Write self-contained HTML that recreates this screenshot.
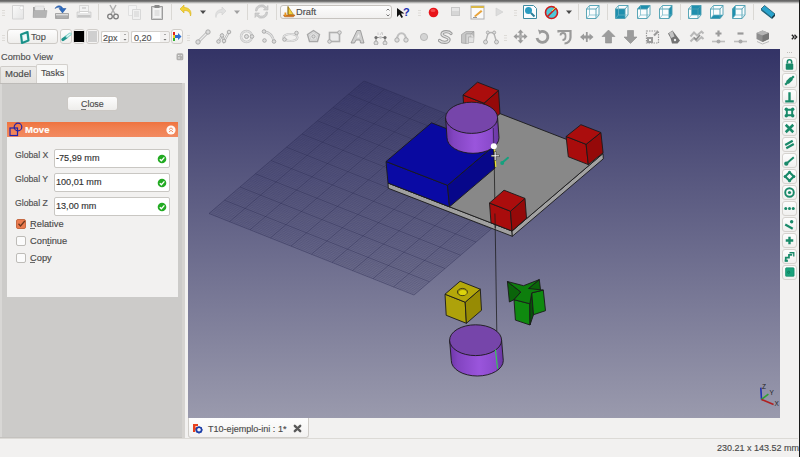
<!DOCTYPE html>
<html><head><meta charset="utf-8">
<style>
*{margin:0;padding:0;box-sizing:border-box}
html,body{width:800px;height:457px;overflow:hidden;background:#f2f1f0;font-family:"Liberation Sans",sans-serif;color:#3c3c3c;position:relative}
.a{position:absolute}
.t{white-space:nowrap;line-height:1;-webkit-text-stroke:.15px currentColor}
</style></head><body>

<div class="a" style="left:0px;top:0px;width:800px;height:4px;background:linear-gradient(#636363,#6b6b6b 30%,#b9b9b8 65%,#f2f1f0)"></div>
<div class="a" style="left:799px;top:0px;width:1px;height:457px;background:#1a1a1a"></div>
<svg class="a" style="left:2px;top:9px" width="4" height="7" viewBox="0 0 4 7"><rect x="0" y="1" width="3" height="1" fill="#dddbd7"/><rect x="0" y="3.5" width="3" height="1" fill="#dddbd7"/><rect x="0" y="6" width="3" height="1" fill="#dddbd7"/></svg>
<svg class="a" style="left:12px;top:5px" width="13" height="15" viewBox="0 0 13 15"><defs><linearGradient id="nd" x1="0" y1="0" x2="1" y2="1"><stop offset="0" stop-color="#fafafa"/><stop offset="1" stop-color="#e4e4e4"/></linearGradient></defs><path d="M.5 .5h11v13.5H.5z" fill="url(#nd)" stroke="#d4d4d4"/><circle cx="9.5" cy="3" r="1.8" fill="#fff" stroke="#d8d8d8" stroke-width=".6"/></svg>
<svg class="a" style="left:32px;top:5px" width="16" height="14" viewBox="0 0 16 14"><path d="M1 2h5l1 1h6v9H1z" fill="#a5a5a5"/><path d="M3 1h9v6H3z" fill="#e8e8e8" stroke="#cfcfcf" stroke-width=".5"/><path d="M1 12.5 1.5 5.5h13.5L14 12.5z" fill="#b4b4b4" stroke="#a0a0a0" stroke-width=".5"/></svg>
<svg class="a" style="left:54px;top:4px" width="16" height="16" viewBox="0 0 16 16"><path d="M1.5 9.5h13v5h-13z" fill="#a0a0a0" stroke="#8e8e8e" stroke-width=".6"/><path d="M2 10h12v1.5H2z" fill="#dcdcdc"/><path d="M2.5 12.5h11v1h-11z" fill="#bdbdbd"/><path d="M1 4.5C3 1 7 .8 9 4.5H12L8.5 9 5 4.5h2.2C6 3 3.5 2.8 1 4.5z" fill="#2d6cc0" stroke="#1e4f96" stroke-width=".5"/></svg>
<svg class="a" style="left:76px;top:5px" width="16" height="14" viewBox="0 0 16 14"><path d="M3.5 .5h9v6h-9z" fill="#f2f2f2" stroke="#c8c8c8" stroke-width=".6"/><path d="M6 3h4" stroke="#bbb"/><path d="M1 7h14v5.5H1z" fill="#e6e6e6" stroke="#c4c4c4" stroke-width=".6"/><path d="M1.5 10h13v2h-13z" fill="#c6c6c6"/><path d="M4 7.5h8" stroke="#fff"/></svg>
<div class="a" style="left:98px;top:4px;width:1px;height:16px;background:#dad8d4"></div>
<svg class="a" style="left:106px;top:4px" width="14" height="16" viewBox="0 0 14 16"><path d="M4 1l5 9M10 1 5 10" stroke="#b0b0b0" stroke-width="1.5" fill="none"/><circle cx="4" cy="12.5" r="2.3" fill="none" stroke="#7d7d7d" stroke-width="1.3"/><circle cx="10" cy="12.5" r="2.3" fill="none" stroke="#7d7d7d" stroke-width="1.3"/></svg>
<svg class="a" style="left:127px;top:4px" width="16" height="16" viewBox="0 0 16 16"><path d="M1.5 1.5h8v10h-8z" fill="#f4f4f4" stroke="#e0e0e0"/><path d="M5.5 5.5h8v10h-8z" fill="#f0f0f0" stroke="#d8d8d8"/><path d="M7 8h5M7 10h5M7 12h5" stroke="#d2d2d2"/></svg>
<svg class="a" style="left:150px;top:4px" width="14" height="16" viewBox="0 0 14 16"><path d="M1.5 2.5h11v13h-11z" fill="#cfcfcf" stroke="#9c9c9c"/><path d="M3 4h8v10H3z" fill="#f3f3f3"/><path d="M4.5 1h5v3h-5z" fill="#8a8a8a"/><path d="M4.5 7h5M4.5 9h5M4.5 11h5" stroke="#cfcfcf"/></svg>
<div class="a" style="left:171px;top:4px;width:1px;height:16px;background:#dad8d4"></div>
<svg class="a" style="left:179px;top:4px" width="14" height="14" viewBox="0 0 14 14"><path d="M5 1 1 5l4 4V6.5c3 0 6 .5 6.5 5.5 1.5-4-.5-8.5-6.5-8.5z" fill="#f2d23a" stroke="#d9b21a" stroke-width=".6"/></svg>
<svg class="a" style="left:200px;top:10px" width="7" height="5" viewBox="0 0 7 5"><path d="M0 .5h6L3 4z" fill="#4a4a4a"/></svg>
<svg class="a" style="left:214px;top:6px" width="13" height="13" viewBox="0 0 13 13"><path d="M8 1l4 4-4 4V6.5c-3 0-5.5.5-6 5-1.2-3.5.5-8 6-8z" fill="#e0e0e0" stroke="#d0d0d0" stroke-width=".6"/></svg>
<svg class="a" style="left:234px;top:10px" width="7" height="5" viewBox="0 0 7 5"><path d="M0 .5h6L3 4z" fill="#a0a0a0"/></svg>
<div class="a" style="left:247px;top:4px;width:1px;height:16px;background:#dad8d4"></div>
<svg class="a" style="left:254px;top:4px" width="15" height="15" viewBox="0 0 15 15"><path d="M3 7a4.5 4.5 0 0 1 8-2.5L9.5 6H14V1.5L12.3 3.2A6 6 0 0 0 1.5 7z" fill="#cfcfcf" stroke="#b8b8b8" stroke-width=".6"/><path d="M12 8a4.5 4.5 0 0 1-8 2.5L5.5 9H1v4.5l1.7-1.7A6 6 0 0 0 13.5 8z" fill="#cfcfcf" stroke="#b8b8b8" stroke-width=".6"/></svg>
<div class="a" style="left:276px;top:4px;width:1px;height:16px;background:#dad8d4"></div>
<div class="a" style="left:280px;top:5px;width:112px;height:14px;border:1px solid #c6c3bf;border-radius:3px;background:linear-gradient(#fdfdfd,#f1f0ef)"></div>
<svg class="a" style="left:282px;top:5px" width="14" height="13" viewBox="0 0 14 13"><path d="M6 1.5 11.5 9.5H6z" fill="#f2cf3a" stroke="#a07810" stroke-width=".6"/><path d="M6 1.5V9.5" stroke="#7a5a10" stroke-width=".8"/><path d="M1.5 10h11.5l-1.5 1.8H2.5z" fill="#e07a18" stroke="#9a5010" stroke-width=".5"/><path d="M2.5 7.5h1.8v3.5H2.5z" fill="#e8961e"/></svg>
<div class="a t" style="left:296px;top:7.5px;font-size:9.3px;color:#4c4c4c;font-weight:normal;">Draft</div>
<svg class="a" style="left:385px;top:7px" width="6" height="11" viewBox="0 0 6 11"><path d="M1.5 3.5 3 2 4.5 3.5M1.5 7.5 3 9 4.5 7.5" fill="none" stroke="#666" stroke-width=".9"/></svg>
<svg class="a" style="left:396px;top:5px" width="14" height="14" viewBox="0 0 14 14"><path d="M1 3 1 12 3.5 9.5 5.5 13 7 12 5 8.5H8.5z" fill="#111"/><text x="7" y="11" font-family="Liberation Sans" font-weight="bold" font-size="11" fill="#1a2fb0">?</text></svg>
<svg class="a" style="left:418px;top:9px" width="4" height="7" viewBox="0 0 4 7"><rect x="0" y="1" width="3" height="1" fill="#dddbd7"/><rect x="0" y="3.5" width="3" height="1" fill="#dddbd7"/><rect x="0" y="6" width="3" height="1" fill="#dddbd7"/></svg>
<svg class="a" style="left:428px;top:7px" width="11" height="11" viewBox="0 0 11 11"><circle cx="5.5" cy="5.5" r="4.8" fill="#e8141a"/><ellipse cx="5" cy="3.5" rx="2.5" ry="1.5" fill="#ff7070" opacity=".6"/></svg>
<svg class="a" style="left:451px;top:7px" width="9" height="9" viewBox="0 0 9 9"><rect x=".5" y=".5" width="8" height="8" fill="#d6d6d6" stroke="#c8c8c8"/><rect x="1" y="1" width="7" height="3" fill="#e6e6e6"/></svg>
<svg class="a" style="left:470px;top:5px" width="15" height="15" viewBox="0 0 15 15"><rect x="1" y="1" width="13" height="13" fill="#fafafa" stroke="#b0b0b0"/><rect x="1" y="1" width="13" height="2" fill="#d9b84a"/><path d="M4 11 11 5l1.5 1.5-7 5.5z" fill="#e8a33a"/><path d="M3 12.5h4" stroke="#999"/></svg>
<svg class="a" style="left:495px;top:7px" width="9" height="10" viewBox="0 0 9 10"><path d="M1 1v8l7-4z" fill="#dcdcdc" stroke="#cfcfcf" stroke-width=".6"/></svg>
<svg class="a" style="left:514px;top:9px" width="4" height="7" viewBox="0 0 4 7"><rect x="0" y="1" width="3" height="1" fill="#dddbd7"/><rect x="0" y="3.5" width="3" height="1" fill="#dddbd7"/><rect x="0" y="6" width="3" height="1" fill="#dddbd7"/></svg>
<svg class="a" style="left:522px;top:4px" width="16" height="16" viewBox="0 0 16 16"><path d="M1.5 1.5h10l3 3v10h-13z" fill="#fbfdff" stroke="#3d8aa0"/><circle cx="6.5" cy="6.5" r="3.5" fill="#2a9bc0"/><path d="M9 9l3.5 3.5" stroke="#2a7f9a" stroke-width="2"/></svg>
<svg class="a" style="left:544px;top:5px" width="16" height="15" viewBox="0 0 16 15"><circle cx="7.5" cy="7.5" r="6" fill="#4ec8d8"/><circle cx="7.5" cy="7.5" r="6" fill="none" stroke="#cc1c1c" stroke-width="1.6"/><path d="M3.3 11.7 11.7 3.3" stroke="#cc1c1c" stroke-width="1.6"/><path d="M8 6 12 2" stroke="#f2d23a" stroke-width="1"/></svg>
<svg class="a" style="left:566px;top:10px" width="7" height="5" viewBox="0 0 7 5"><path d="M0 .5h6L3 4z" fill="#4a4a4a"/></svg>
<div class="a" style="left:578px;top:4px;width:1px;height:16px;background:#dad8d4"></div>
<svg class="a" style="left:585px;top:4px" width="15" height="16" viewBox="0 0 15 16"><path d="M1.5 5h9.5v9.5H1.5zM1.5 5 4.5 1.5H14L11 5zM11 5 14 1.5V11l-3 3.5z" fill="#f9fcfd"/><path d="M1.5 5h9.5v9.5H1.5zM1.5 5 4.5 1.5H14L11 5M14 1.5V11l-3 3.5" fill="none" stroke="#4a9db0" stroke-width=".9"/><path d="M4.5 1.5V11H14M4.5 11 1.5 14.5" fill="none" stroke="#6fb4c4" stroke-width=".7"/></svg>
<div class="a" style="left:607px;top:4px;width:1px;height:16px;background:#dad8d4"></div>
<svg class="a" style="left:614px;top:4px" width="15" height="16" viewBox="0 0 15 16"><path d="M1.5 5h9.5v9.5H1.5zM1.5 5 4.5 1.5H14L11 5zM11 5 14 1.5V11l-3 3.5z" fill="#f9fcfd"/><path d="M1.5 5h9.5v9.5H1.5z" fill="#1f8fae"/><path d="M1.5 5h9.5v9.5H1.5zM1.5 5 4.5 1.5H14L11 5M14 1.5V11l-3 3.5" fill="none" stroke="#4a9db0" stroke-width=".9"/><path d="M4.5 1.5V11H14M4.5 11 1.5 14.5" fill="none" stroke="#6fb4c4" stroke-width=".7"/></svg>
<svg class="a" style="left:636px;top:4px" width="15" height="16" viewBox="0 0 15 16"><path d="M1.5 5h9.5v9.5H1.5zM1.5 5 4.5 1.5H14L11 5zM11 5 14 1.5V11l-3 3.5z" fill="#f9fcfd"/><path d="M1.5 5 4.5 1.5H14L11 5z" fill="#1f8fae"/><path d="M1.5 5h9.5v9.5H1.5zM1.5 5 4.5 1.5H14L11 5M14 1.5V11l-3 3.5" fill="none" stroke="#4a9db0" stroke-width=".9"/><path d="M4.5 1.5V11H14M4.5 11 1.5 14.5" fill="none" stroke="#6fb4c4" stroke-width=".7"/></svg>
<svg class="a" style="left:658px;top:4px" width="15" height="16" viewBox="0 0 15 16"><path d="M1.5 5h9.5v9.5H1.5zM1.5 5 4.5 1.5H14L11 5zM11 5 14 1.5V11l-3 3.5z" fill="#f9fcfd"/><path d="M11 5 14 1.5V11l-3 3.5z" fill="#1f8fae"/><path d="M1.5 5h9.5v9.5H1.5zM1.5 5 4.5 1.5H14L11 5M14 1.5V11l-3 3.5" fill="none" stroke="#4a9db0" stroke-width=".9"/><path d="M4.5 1.5V11H14M4.5 11 1.5 14.5" fill="none" stroke="#6fb4c4" stroke-width=".7"/></svg>
<div class="a" style="left:680px;top:4px;width:1px;height:16px;background:#dad8d4"></div>
<svg class="a" style="left:687px;top:4px" width="15" height="16" viewBox="0 0 15 16"><path d="M1.5 5h9.5v9.5H1.5zM1.5 5 4.5 1.5H14L11 5zM11 5 14 1.5V11l-3 3.5z" fill="#f9fcfd"/><path d="M4.5 1.5H14V11H4.5z" fill="#1f8fae"/><path d="M1.5 5h9.5v9.5H1.5zM1.5 5 4.5 1.5H14L11 5M14 1.5V11l-3 3.5" fill="none" stroke="#4a9db0" stroke-width=".9"/><path d="M4.5 1.5V11H14M4.5 11 1.5 14.5" fill="none" stroke="#6fb4c4" stroke-width=".7"/></svg>
<svg class="a" style="left:709px;top:4px" width="15" height="16" viewBox="0 0 15 16"><path d="M1.5 5h9.5v9.5H1.5zM1.5 5 4.5 1.5H14L11 5zM11 5 14 1.5V11l-3 3.5z" fill="#f9fcfd"/><path d="M1.5 14.5 4.5 11H14l-3 3.5z" fill="#1f8fae"/><path d="M1.5 5h9.5v9.5H1.5zM1.5 5 4.5 1.5H14L11 5M14 1.5V11l-3 3.5" fill="none" stroke="#4a9db0" stroke-width=".9"/><path d="M4.5 1.5V11H14M4.5 11 1.5 14.5" fill="none" stroke="#6fb4c4" stroke-width=".7"/></svg>
<svg class="a" style="left:731px;top:4px" width="15" height="16" viewBox="0 0 15 16"><path d="M1.5 5h9.5v9.5H1.5zM1.5 5 4.5 1.5H14L11 5zM11 5 14 1.5V11l-3 3.5z" fill="#f9fcfd"/><path d="M1.5 5 4.5 1.5V11l-3 3.5z" fill="#1f8fae"/><path d="M1.5 5h9.5v9.5H1.5zM1.5 5 4.5 1.5H14L11 5M14 1.5V11l-3 3.5" fill="none" stroke="#4a9db0" stroke-width=".9"/><path d="M4.5 1.5V11H14M4.5 11 1.5 14.5" fill="none" stroke="#6fb4c4" stroke-width=".7"/></svg>
<div class="a" style="left:753px;top:4px;width:1px;height:16px;background:#dad8d4"></div>
<svg class="a" style="left:760px;top:4px" width="16" height="16" viewBox="0 0 16 16"><path d="M1 5 4.5 1.5 15 10 11.5 13.5z" fill="#2aa3cc" stroke="#0f4a5e" stroke-width=".7"/><path d="M11.5 13.5 15 10 15 12 12 15z" fill="#123848"/><path d="M1 5 11.5 13.5 12 15 1.3 6.8z" fill="#14607a"/></svg>
<svg class="a" style="left:2px;top:34px" width="4" height="7" viewBox="0 0 4 7"><rect x="0" y="1" width="3" height="1" fill="#dddbd7"/><rect x="0" y="3.5" width="3" height="1" fill="#dddbd7"/><rect x="0" y="6" width="3" height="1" fill="#dddbd7"/></svg>
<div class="a" style="left:7px;top:29px;width:51px;height:15px;border:1px solid #cdcac6;border-radius:3px;background:linear-gradient(#fdfdfd,#efeeec)"></div>
<svg class="a" style="left:19px;top:31px" width="11" height="13" viewBox="0 0 11 13"><path d="M2 3.5 8.5 1 9.5 9.5 3 12z" fill="#e8f3f3" stroke="#23a098" stroke-width="2.2" stroke-linejoin="round"/><path d="M4.2 5.2 7 4.2 7.4 7.8 4.6 8.8z" fill="#f4fbfb"/><path d="M2 3.5 8.5 1 9.5 9.5 3 12z" fill="none" stroke="#157a74" stroke-width=".6"/></svg>
<div class="a t" style="left:31px;top:33px;font-size:9.2px;color:#505050;font-weight:normal;">Top</div>
<div class="a" style="left:60px;top:29px;width:12px;height:15px;border:1px solid #d0cdc9;border-radius:3px;background:linear-gradient(#fdfdfd,#efeeec)"></div>
<svg class="a" style="left:61px;top:31px" width="11" height="11" viewBox="0 0 11 11"><path d="M2 8.5 5.5 6" stroke="#1f948c" stroke-width="3.2" stroke-linecap="round"/><path d="M6 5.5 9.2 3" stroke="#7fd0c8" stroke-width="3" stroke-linecap="round"/><path d="M6 5.5 9.2 3" stroke="#e8f8f6" stroke-width="1.2" stroke-linecap="round"/></svg>
<div class="a" style="left:73px;top:29px;width:12px;height:15px;border:1px solid #d0cdc9;border-radius:3px;background:#f4f3f2"></div>
<div class="a" style="left:74px;top:31px;width:10px;height:11px;background:#000"></div>
<div class="a" style="left:86px;top:29px;width:13px;height:15px;border:1px solid #d0cdc9;border-radius:3px;background:#f4f3f2"></div>
<div class="a" style="left:88px;top:31px;width:9px;height:11px;background:#cfcfcf"></div>
<div class="a" style="left:101px;top:31px;width:28px;height:12px;border:1px solid #d3d0cc;border-radius:2px;background:#f3f2f1"></div>
<div class="a" style="left:101px;top:31px;width:19px;height:12px;background:#fff;border:1px solid #d3d0cc;border-right:none;border-radius:2px 0 0 2px"></div>
<div class="a t" style="left:103px;top:33.5px;font-size:9px;color:#505050;font-weight:normal;">2px</div>
<svg class="a" style="left:122px;top:32px" width="6" height="10" viewBox="0 0 6 10"><path d="M2 3 3 2 4 3" fill="none" stroke="#888" stroke-width=".7"/><path d="M1.5 7h3L3 8.6z" fill="#6a6a6a"/></svg>
<div class="a" style="left:131px;top:31px;width:39px;height:12px;border:1px solid #d3d0cc;border-radius:2px;background:#f3f2f1"></div>
<div class="a" style="left:131px;top:31px;width:29px;height:12px;background:#fff;border:1px solid #d3d0cc;border-right:none;border-radius:2px 0 0 2px"></div>
<div class="a t" style="left:134px;top:33.5px;font-size:9px;color:#505050;font-weight:normal;">0,20</div>
<svg class="a" style="left:162px;top:32px" width="6" height="10" viewBox="0 0 6 10"><path d="M2 3 3 2 4 3" fill="none" stroke="#888" stroke-width=".7"/><path d="M1.5 7h3L3 8.6z" fill="#6a6a6a"/></svg>
<div class="a" style="left:171px;top:29px;width:12px;height:15px;border:1px solid #d0cdc9;border-radius:3px;background:linear-gradient(#fdfdfd,#efeeec)"></div>
<svg class="a" style="left:172px;top:31px" width="10" height="11" viewBox="0 0 10 11"><rect x="1" y="1" width="2" height="3" fill="#e02020"/><rect x="1" y="4" width="2" height="3" fill="#f0d020"/><rect x="1" y="7" width="2" height="3" fill="#30b030"/><path d="M3 4h3V2l3.5 3.5L6 9V7H3z" fill="#2f6fd0"/></svg>
<svg class="a" style="left:187px;top:34px" width="4" height="7" viewBox="0 0 4 7"><rect x="0" y="1" width="3" height="1" fill="#dddbd7"/><rect x="0" y="3.5" width="3" height="1" fill="#dddbd7"/><rect x="0" y="6" width="3" height="1" fill="#dddbd7"/></svg>
<svg class="a" style="left:195px;top:29px" width="16" height="16" viewBox="0 0 16 16"><path d="M3 13 13 3" stroke="#b5b5b5" stroke-width="3"/><path d="M3 13 13 3" stroke="#ececec" stroke-width="1.4"/><circle cx="3" cy="13" r="2.2" fill="#dcdcdc" stroke="#a0a0a0" stroke-width=".8"/><circle cx="13" cy="3" r="2.2" fill="#dcdcdc" stroke="#a0a0a0" stroke-width=".8"/></svg>
<svg class="a" style="left:216px;top:29px" width="16" height="16" viewBox="0 0 16 16"><path d="M2.5 12.5 6 6.5 8 12 13 3" stroke="#b5b5b5" stroke-width="2.4" fill="none"/><path d="M2.5 12.5 6 6.5 8 12 13 3" stroke="#ececec" stroke-width="1" fill="none"/><circle cx="2.5" cy="12.5" r="1.8" fill="#dcdcdc" stroke="#a0a0a0" stroke-width=".8"/><circle cx="6" cy="6.5" r="1.8" fill="#dcdcdc" stroke="#a0a0a0" stroke-width=".8"/><circle cx="8" cy="12" r="1.8" fill="#dcdcdc" stroke="#a0a0a0" stroke-width=".8"/><circle cx="13" cy="3" r="1.8" fill="#dcdcdc" stroke="#a0a0a0" stroke-width=".8"/></svg>
<svg class="a" style="left:239px;top:29px" width="16" height="16" viewBox="0 0 16 16"><circle cx="7.5" cy="7.5" r="5.5" fill="none" stroke="#c4c4c4" stroke-width="2.4"/><circle cx="7.5" cy="7.5" r="5.5" fill="none" stroke="#ededed" stroke-width="1"/><circle cx="7.5" cy="7.5" r="2" fill="#dcdcdc" stroke="#a0a0a0" stroke-width=".8"/><circle cx="13" cy="7.5" r="1.8" fill="#dcdcdc" stroke="#a0a0a0" stroke-width=".8"/></svg>
<svg class="a" style="left:261px;top:29px" width="16" height="16" viewBox="0 0 16 16"><path d="M3 2.5Q11 3.5 13 12.5" stroke="#c0c0c0" stroke-width="2.4" fill="none"/><path d="M3 2.5Q11 3.5 13 12.5" stroke="#ededed" stroke-width="1" fill="none"/><circle cx="3" cy="2.5" r="1.8" fill="#dcdcdc" stroke="#a0a0a0" stroke-width=".8"/><circle cx="3.5" cy="11.5" r="1.8" fill="#dcdcdc" stroke="#a0a0a0" stroke-width=".8"/><circle cx="13" cy="12.5" r="1.8" fill="#dcdcdc" stroke="#a0a0a0" stroke-width=".8"/></svg>
<svg class="a" style="left:282px;top:29px" width="17" height="16" viewBox="0 0 17 16"><ellipse cx="8.5" cy="8.5" rx="7" ry="3.5" fill="none" stroke="#c0c0c0" stroke-width="2.2"/><ellipse cx="8.5" cy="8.5" rx="7" ry="3.5" fill="none" stroke="#ededed" stroke-width="1"/><circle cx="2.5" cy="10.5" r="1.8" fill="#dcdcdc" stroke="#a0a0a0" stroke-width=".8"/><circle cx="14.5" cy="4" r="1.8" fill="#dcdcdc" stroke="#a0a0a0" stroke-width=".8"/></svg>
<svg class="a" style="left:306px;top:29px" width="16" height="16" viewBox="0 0 16 16"><path d="M7.5 1.5 13.5 5.5 11.5 12.5H3.5L1.5 5.5z" fill="#e4e4e4" stroke="#a8a8a8" stroke-width="1.4"/><path d="M7.5 3.5 11.5 6 10 11H5L3.5 6z" fill="none" stroke="#cfcfcf"/><circle cx="7.5" cy="7.5" r="1.6" fill="#dcdcdc" stroke="#a0a0a0" stroke-width=".8"/></svg>
<svg class="a" style="left:327px;top:29px" width="16" height="16" viewBox="0 0 16 16"><rect x="2.5" y="3.5" width="10" height="9" fill="#ececec" stroke="#b0b0b0" stroke-width="1.6"/><circle cx="2.5" cy="12.5" r="1.8" fill="#dcdcdc" stroke="#a0a0a0" stroke-width=".8"/><circle cx="12.5" cy="3.5" r="1.8" fill="#dcdcdc" stroke="#a0a0a0" stroke-width=".8"/></svg>
<svg class="a" style="left:350px;top:29px" width="16" height="16" viewBox="0 0 16 16"><path d="M1 14 7 1.5h3.5L14 14h-3.5L10 11H6l-1.5 3z" fill="#cfcfcf" stroke="#8e8e8e" stroke-width=".8"/><path d="M6.8 8.5h2.8L9 4.5z" fill="#f2f1f0"/></svg>
<svg class="a" style="left:372px;top:29px" width="16" height="16" viewBox="0 0 16 16"><path d="M4 9v5M13 9v5M4 8.5h9" stroke="#9a9a9a" stroke-width="1.2"/><circle cx="4" cy="8.5" r="1.6" fill="#6e6e6e"/><circle cx="13" cy="8.5" r="1.6" fill="#6e6e6e"/><circle cx="8.5" cy="8.5" r="1.4" fill="#c8c8c8"/><circle cx="4" cy="14" r="2" fill="#dcdcdc" stroke="#a0a0a0" stroke-width=".8"/><circle cx="13" cy="14" r="2" fill="#dcdcdc" stroke="#a0a0a0" stroke-width=".8"/><path d="M6 3.5v2.5M8 6l2-3M10.5 3.5v2.5" stroke="#c4c4c4" stroke-width=".8"/></svg>
<svg class="a" style="left:394px;top:29px" width="16" height="16" viewBox="0 0 16 16"><path d="M3 11C3 2 12 2 12 11" stroke="#c0c0c0" stroke-width="2.2" fill="none"/><circle cx="3" cy="11" r="2.2" fill="#dcdcdc" stroke="#a0a0a0" stroke-width=".8"/><circle cx="12" cy="11" r="2.2" fill="#dcdcdc" stroke="#a0a0a0" stroke-width=".8"/></svg>
<svg class="a" style="left:419px;top:32px" width="10" height="10" viewBox="0 0 10 10"><circle cx="5" cy="5" r="3.6" fill="#d4d4d4" stroke="#b0b0b0" stroke-width=".8"/></svg>
<svg class="a" style="left:438px;top:29px" width="16" height="16" viewBox="0 0 16 16"><path d="M13 4.5C11 2 4.5 2 4 5S12 7.5 11 11 3.5 13.5 1.5 11.5" stroke="#9e9e9e" stroke-width="3.2" fill="none" stroke-linecap="round"/><path d="M13 4.5C11 2 4.5 2 4 5S12 7.5 11 11 3.5 13.5 1.5 11.5" stroke="#e6e6e6" stroke-width="1.1" fill="none" stroke-linecap="round"/></svg>
<svg class="a" style="left:460px;top:29px" width="16" height="16" viewBox="0 0 16 16"><path d="M1.5 5.5 6 2.5h8l-3 2.5H6v9.5L1.5 14z" fill="#c6c6c6" stroke="#a0a0a0" stroke-width=".7"/><path d="M6 5h5v3H8.5v6.5H6z" fill="#d6d6d6" stroke="#a8a8a8" stroke-width=".6"/><path d="M8.5 8H14l-.5 5.5H8.5z" fill="#e2e2e2" stroke="#ababab" stroke-width=".6"/><path d="M11 5 14 2.5V8" fill="#bdbdbd" stroke="#a0a0a0" stroke-width=".6"/></svg>
<svg class="a" style="left:483px;top:29px" width="16" height="16" viewBox="0 0 16 16"><path d="M2.5 13 5 4.5Q8 2.5 11 4.5L13.5 13" stroke="#b4b4b4" stroke-width="1.4" fill="none"/><circle cx="2.5" cy="13" r="2" fill="#dcdcdc" stroke="#a0a0a0" stroke-width=".8"/><circle cx="13.5" cy="13" r="2" fill="#dcdcdc" stroke="#a0a0a0" stroke-width=".8"/><circle cx="4.8" cy="3.5" r="1.5" fill="#dcdcdc" stroke="#a0a0a0" stroke-width=".8"/><circle cx="11.2" cy="3.5" r="1.5" fill="#dcdcdc" stroke="#a0a0a0" stroke-width=".8"/></svg>
<svg class="a" style="left:504px;top:34px" width="4" height="7" viewBox="0 0 4 7"><rect x="0" y="1" width="3" height="1" fill="#dddbd7"/><rect x="0" y="3.5" width="3" height="1" fill="#dddbd7"/><rect x="0" y="6" width="3" height="1" fill="#dddbd7"/></svg>
<svg class="a" style="left:513px;top:29px" width="16" height="16" viewBox="0 0 16 16"><path d="M7.5 2.5v10M2.5 7.5h10" stroke="#9a9a9a" stroke-width="2.2"/><path d="M7.5 .5 10.5 3.8H4.5zM7.5 14.5 10.5 11.2H4.5zM.5 7.5 3.8 4.5V10.5zM14.5 7.5 11.2 4.5V10.5z" fill="#9a9a9a"/><circle cx="7.5" cy="7.5" r="1.8" fill="#b0b0b0"/></svg>
<svg class="a" style="left:535px;top:29px" width="16" height="16" viewBox="0 0 16 16"><path d="M6 2.5A5.5 5.5 0 1 1 2 9" stroke="#9a9a9a" stroke-width="2.8" fill="none"/><path d="M3 .5 8 2.5 4.5 5.5z" fill="#9a9a9a"/></svg>
<svg class="a" style="left:557px;top:29px" width="16" height="16" viewBox="0 0 16 16"><path d="M1.5 3.5V2h12v6.5a6 6 0 0 1-6 6" stroke="#9a9a9a" stroke-width="2.2" fill="none"/><path d="M3.5 6.5a2.5 2.5 0 0 1 5 0V8a3 3 0 0 1-3 3" stroke="#9a9a9a" stroke-width="1.8" fill="none"/></svg>
<svg class="a" style="left:579px;top:29px" width="16" height="16" viewBox="0 0 16 16"><path d="M1 8 5 4.5v2h5.5v-2L14.5 8 10.5 11.5v-2H5v2z" fill="#9a9a9a"/><path d="M7.8 3v10" stroke="#9a9a9a" stroke-width="1.8"/></svg>
<svg class="a" style="left:601px;top:29px" width="15" height="16" viewBox="0 0 15 16"><path d="M7.5 1 14 7.5H10.5V14h-6V7.5H1z" fill="#9c9c9c" stroke="#8d8d8d" stroke-width=".6"/></svg>
<svg class="a" style="left:623px;top:29px" width="15" height="16" viewBox="0 0 15 16"><path d="M7.5 14.5 14 8H10.5V1.5h-6V8H1z" fill="#9c9c9c" stroke="#8d8d8d" stroke-width=".6"/></svg>
<svg class="a" style="left:645px;top:29px" width="16" height="16" viewBox="0 0 16 16"><rect x="1.5" y="2" width="12" height="12" fill="none" stroke="#9a9a9a" stroke-width="1.2" stroke-dasharray="1.5 1"/><rect x="2" y="8" width="6" height="6" fill="#9a9a9a"/><rect x="4" y="10" width="2" height="2" fill="#f0f0f0"/><path d="M9 6.5 13 2.5" stroke="#9a9a9a" stroke-width="2.2"/></svg>
<svg class="a" style="left:666px;top:29px" width="16" height="16" viewBox="0 0 16 16"><path d="M2 4.5 6.5 1.5 14 11.5 11.5 14.5H6L4.5 9z" fill="#737373"/><path d="M3 4 6.5 2 8.5 7.5 5 9z" fill="#c4c4c4"/><circle cx="9" cy="11" r="1.2" fill="#eee"/></svg>
<svg class="a" style="left:689px;top:29px" width="16" height="16" viewBox="0 0 16 16"><path d="M1.5 7.5 5 3.5l3 3 4.5-4 2 2" stroke="#b8b8b8" stroke-width="2" fill="none"/><path d="M1.5 12.5 5 9l3 3 4.5-4 2 2" stroke="#b8b8b8" stroke-width="2" fill="none"/><path d="M5 8.5l2 2 4-4.5" stroke="#8e8e8e" stroke-width="1.6" fill="none"/></svg>
<svg class="a" style="left:711px;top:29px" width="16" height="16" viewBox="0 0 16 16"><path d="M7.5 1.5v6M4.5 4.5h6" stroke="#9a9a9a" stroke-width="2.2"/><path d="M1 12.5h13" stroke="#bdbdbd" stroke-width="1.6"/><circle cx="7.5" cy="12.5" r="2" fill="#a8a8a8"/></svg>
<svg class="a" style="left:733px;top:29px" width="16" height="16" viewBox="0 0 16 16"><path d="M4.5 4.5h6" stroke="#9a9a9a" stroke-width="2.2"/><path d="M1 12.5h13" stroke="#bdbdbd" stroke-width="1.6"/><circle cx="7.5" cy="12.5" r="2" fill="#a8a8a8"/></svg>
<svg class="a" style="left:755px;top:29px" width="16" height="16" viewBox="0 0 16 16"><path d="M1.5 4 7.5 1.5 14 4v6l-6.5 3L1.5 10z" fill="#8e8e8e"/><path d="M1.5 4 7.5 1.5 14 4 7.5 6.5z" fill="#b5b5b5"/><path d="M7.5 6.5v6.5L14 10V4z" fill="#777"/><path d="M2 12.5 7.5 15 14 12.5" stroke="#bbb" fill="none"/></svg>
<svg class="a" style="left:791px;top:34px" width="7" height="6" viewBox="0 0 7 6"><path d="M.8 .8 3 3 .8 5.2M3.5 .8 5.7 3 3.5 5.2" stroke="#222" stroke-width="1.3" fill="none"/></svg>
<div class="a" style="left:0px;top:48px;width:188px;height:1px;background:#f2f1f0"></div>
<div class="a t" style="left:1px;top:53px;font-size:9.2px;color:#505050;font-weight:normal;">Combo View</div>
<svg class="a" style="left:176px;top:53px" width="8" height="8" viewBox="0 0 8 8"><rect x=".5" y=".3" width="6.8" height="7" rx="1.5" fill="#b2b1af"/><path d="M2 2.5h1.5M2 5h2M5.5 5.8v.3" stroke="#eee" stroke-width=".9"/><circle cx="5.3" cy="2.6" r=".7" fill="#e6e6e6"/></svg>
<div class="a" style="left:0px;top:66px;width:37px;height:17px;border:1px solid #cfccc8;border-bottom:none;border-radius:2px 2px 0 0;background:linear-gradient(#ecebe9,#e3e1de)"></div>
<div class="a t" style="left:5px;top:69.2px;font-size:9.6px;color:#4a4a4a;font-weight:normal;">Model</div>
<div class="a" style="left:36px;top:64px;width:32px;height:19px;border:1px solid #d3d0cc;border-bottom:none;border-radius:2px 2px 0 0;background:#f8f8f7"></div>
<div class="a t" style="left:41px;top:69.2px;font-size:9.1px;color:#4a4a4a;font-weight:normal;">Tasks</div>
<div class="a" style="left:0px;top:83px;width:185px;height:355px;background:#cccbc9;border-top:1px solid #bdbbb8;border-bottom:1px solid #c4c2bf"></div>
<div class="a" style="left:0px;top:84px;width:2px;height:353px;background:#d8d7d5"></div>
<div class="a" style="left:182px;top:83px;width:3px;height:355px;background:#d5d3d0"></div>
<div class="a" style="left:67px;top:96px;width:51px;height:15px;border:1px solid #cbc8c4;border-radius:3px;background:linear-gradient(#fdfdfd,#eeedeb)"></div>
<div class="a t" style="left:81px;top:99.5px;font-size:8.9px;color:#4a4a4a;font-weight:normal;">Close</div>
<div class="a" style="left:81px;top:109px;width:5px;height:1px;background:#7a7a7a"></div>
<div class="a" style="left:7px;top:122px;width:171px;height:15px;background:linear-gradient(#ef733f,#f07f4f 35%,#f28a61)"></div>
<svg class="a" style="left:9px;top:122px" width="15" height="15" viewBox="0 0 15 15"><rect x="1" y="6" width="7.5" height="7.5" fill="none" stroke="#2222aa" stroke-width="1.2"/><circle cx="9" cy="5" r="3.8" fill="none" stroke="#2222aa" stroke-width="1.2"/></svg>
<div class="a t" style="left:25px;top:125px;font-size:9.6px;color:#ffffff;font-weight:bold;">Move</div>
<svg class="a" style="left:166px;top:125px" width="11" height="10" viewBox="0 0 11 10"><circle cx="5" cy="5" r="4.6" fill="#fff" opacity=".95"/><path d="M3 4.5 5 2.8 7 4.5M3 7 5 5.3 7 7" stroke="#ef8a60" stroke-width="1" fill="none"/></svg>
<div class="a" style="left:7px;top:137px;width:171px;height:160px;background:#f2f1f0"></div>
<div class="a t" style="left:15px;top:151.3px;font-size:8.7px;color:#505050;font-weight:normal;">Global X</div>
<div class="a" style="left:54px;top:149px;width:116px;height:19px;background:#fff;border:1px solid #c9c7c3;border-radius:2px"></div>
<div class="a t" style="left:56px;top:154px;font-size:9.1px;color:#333333;font-weight:normal;">-75,99 mm</div>
<svg class="a" style="left:157px;top:154px" width="10" height="10" viewBox="0 0 10 10"><circle cx="5" cy="5" r="4.3" fill="#22aa22"/><path d="M2.8 5.2 4.4 6.8 7.4 3.4" stroke="#fff" stroke-width="1.3" fill="none"/></svg>
<div class="a t" style="left:15px;top:175.3px;font-size:8.7px;color:#505050;font-weight:normal;">Global Y</div>
<div class="a" style="left:54px;top:173px;width:116px;height:19px;background:#fff;border:1px solid #c9c7c3;border-radius:2px"></div>
<div class="a t" style="left:56px;top:178px;font-size:9.1px;color:#333333;font-weight:normal;">100,01 mm</div>
<svg class="a" style="left:157px;top:178px" width="10" height="10" viewBox="0 0 10 10"><circle cx="5" cy="5" r="4.3" fill="#22aa22"/><path d="M2.8 5.2 4.4 6.8 7.4 3.4" stroke="#fff" stroke-width="1.3" fill="none"/></svg>
<div class="a t" style="left:15px;top:199.3px;font-size:8.7px;color:#505050;font-weight:normal;">Global Z</div>
<div class="a" style="left:54px;top:197px;width:116px;height:19px;background:#fff;border:1px solid #c9c7c3;border-radius:2px"></div>
<div class="a t" style="left:56px;top:202px;font-size:9.1px;color:#333333;font-weight:normal;">13,00 mm</div>
<svg class="a" style="left:157px;top:202px" width="10" height="10" viewBox="0 0 10 10"><circle cx="5" cy="5" r="4.3" fill="#22aa22"/><path d="M2.8 5.2 4.4 6.8 7.4 3.4" stroke="#fff" stroke-width="1.3" fill="none"/></svg>
<div class="a" style="left:16px;top:219px;width:10px;height:10px;border:1px solid #c66a44;border-radius:2px;background:#ec7b4f"></div>
<svg class="a" style="left:16px;top:218px" width="11" height="11" viewBox="0 0 11 11"><path d="M2.5 5.8 4.5 8 8.8 3" stroke="#6a3820" stroke-width="1.3" fill="none"/></svg>
<div class="a" style="left:16px;top:236px;width:10px;height:10px;border:1px solid #bebcb8;border-radius:2px;background:#fbfbfb"></div>
<div class="a" style="left:16px;top:253px;width:10px;height:10px;border:1px solid #bebcb8;border-radius:2px;background:#fbfbfb"></div>
<div class="a t" style="left:30px;top:219.6px;font-size:9.3px;color:#4a4a4a;font-weight:normal;">Relative</div>
<div class="a t" style="left:30px;top:236.6px;font-size:9.3px;color:#4a4a4a;font-weight:normal;">Continue</div>
<div class="a t" style="left:30px;top:253.6px;font-size:9.3px;color:#4a4a4a;font-weight:normal;">Copy</div>
<div class="a" style="left:30px;top:228px;width:5px;height:1px;background:#6a6a6a"></div>
<div class="a" style="left:47px;top:245px;width:3px;height:1px;background:#6a6a6a"></div>
<div class="a" style="left:30px;top:262px;width:5px;height:1px;background:#6a6a6a"></div>
<div class="a" style="left:185px;top:49px;width:3px;height:370px;background:#f2f1f0"></div>
<svg class="a" style="left:188px;top:49px" width="592" height="369" viewBox="188 49 592 369"><defs><linearGradient id="bg" x1="0" y1="0" x2="0" y2="1"><stop offset="0" stop-color="#333366"/><stop offset="1" stop-color="#9a9aad"/></linearGradient><linearGradient id="cyl" x1="0" y1="0" x2="1" y2="0"><stop offset="0" stop-color="#6c36a6"/><stop offset=".15" stop-color="#8244c0"/><stop offset=".55" stop-color="#9a55dc"/><stop offset=".86" stop-color="#8a4acb"/><stop offset=".9" stop-color="#7440b0"/><stop offset="1" stop-color="#6a36a2"/></linearGradient></defs>
<rect x="188" y="49" width="592" height="369" fill="url(#bg)"/>
<polygon points="209.0,213.5 414.0,295.0 569.0,162.5 364.0,81.0" fill="#1c1c44" opacity=".07"/>
<path d="M211.1,214.3L366.1,81.8M210.6,212.2L415.6,293.7M213.1,215.1L368.1,82.6M212.1,210.8L417.1,292.4M215.2,215.9L370.1,83.4M213.7,209.5L418.6,291.0M217.2,216.8L372.2,84.3M215.2,208.2L420.2,289.7M219.2,217.6L374.2,85.1M216.8,206.9L421.8,288.4M221.3,218.4L376.3,85.9M218.3,205.6L423.3,287.1M223.3,219.2L378.4,86.7M219.8,204.2L424.9,285.7M225.4,220.0L380.4,87.5M221.4,202.9L426.4,284.4M227.4,220.8L382.4,88.3M222.9,201.6L427.9,283.1M231.6,222.5L386.6,90.0M226.1,198.9L431.1,280.4M233.6,223.3L388.6,90.8M227.6,197.6L432.6,279.1M235.7,224.1L390.6,91.6M229.2,196.3L434.1,277.8M237.7,224.9L392.7,92.4M230.7,194.9L435.7,276.4M239.8,225.7L394.8,93.2M232.2,193.6L437.2,275.1M241.8,226.5L396.8,94.0M233.8,192.3L438.8,273.8M243.8,227.4L398.9,94.9M235.3,191.0L440.4,272.5M245.9,228.2L400.9,95.7M236.9,189.7L441.9,271.1M247.9,229.0L402.9,96.5M238.4,188.3L443.4,269.8M252.1,230.6L407.1,98.1M241.6,185.7L446.6,267.2M254.1,231.4L409.1,98.9M243.1,184.3L448.1,265.9M256.1,232.2L411.1,99.7M244.7,183.0L449.6,264.5M258.2,233.1L413.2,100.6M246.2,181.7L451.2,263.2M260.2,233.9L415.2,101.4M247.8,180.4L452.8,261.9M262.3,234.7L417.3,102.2M249.3,179.1L454.3,260.6M264.4,235.5L419.4,103.0M250.8,177.7L455.9,259.2M266.4,236.3L421.4,103.8M252.4,176.4L457.4,257.9M268.4,237.1L423.4,104.6M253.9,175.1L458.9,256.6M272.6,238.8L427.6,106.3M257.1,172.4L462.1,253.9M274.6,239.6L429.6,107.1M258.6,171.1L463.6,252.6M276.6,240.4L431.6,107.9M260.1,169.8L465.1,251.3M278.7,241.2L433.7,108.7M261.7,168.4L466.7,249.9M280.8,242.0L435.8,109.5M263.2,167.1L468.2,248.6M282.8,242.8L437.8,110.3M264.8,165.8L469.8,247.3M284.9,243.7L439.9,111.2M266.4,164.5L471.4,246.0M286.9,244.5L441.9,112.0M267.9,163.2L472.9,244.7M288.9,245.3L443.9,112.8M269.4,161.8L474.4,243.3M293.1,246.9L448.1,114.4M272.6,159.2L477.6,240.7M295.1,247.7L450.1,115.2M274.1,157.8L479.1,239.3M297.1,248.5L452.1,116.0M275.6,156.5L480.6,238.0M299.2,249.4L454.2,116.9M277.2,155.2L482.2,236.7M301.2,250.2L456.2,117.7M278.8,153.9L483.8,235.4M303.3,251.0L458.3,118.5M280.3,152.6L485.3,234.1M305.4,251.8L460.4,119.3M281.9,151.2L486.9,232.7M307.4,252.6L462.4,120.1M283.4,149.9L488.4,231.4M309.4,253.4L464.4,120.9M284.9,148.6L489.9,230.1M313.6,255.1L468.6,122.6M288.1,145.9L493.1,227.4M315.6,255.9L470.6,123.4M289.6,144.6L494.6,226.1M317.6,256.7L472.6,124.2M291.1,143.3L496.1,224.8M319.7,257.5L474.7,125.0M292.7,141.9L497.7,223.4M321.8,258.3L476.8,125.8M294.2,140.6L499.2,222.1M323.8,259.1L478.8,126.6M295.8,139.3L500.8,220.8M325.9,260.0L480.9,127.5M297.4,138.0L502.4,219.5M327.9,260.8L482.9,128.3M298.9,136.7L503.9,218.2M329.9,261.6L484.9,129.1M300.4,135.3L505.4,216.8M334.1,263.2L489.1,130.7M303.6,132.7L508.6,214.2M336.1,264.0L491.1,131.5M305.1,131.3L510.1,212.8M338.1,264.8L493.1,132.3M306.6,130.0L511.6,211.5M340.2,265.7L495.2,133.2M308.2,128.7L513.2,210.2M342.2,266.5L497.2,134.0M309.8,127.4L514.8,208.9M344.3,267.3L499.3,134.8M311.3,126.0L516.3,207.6M346.4,268.1L501.4,135.6M312.9,124.7L517.9,206.2M348.4,268.9L503.4,136.4M314.4,123.4L519.4,204.9M350.4,269.7L505.4,137.2M315.9,122.1L521.0,203.6M354.5,271.4L509.5,138.9M319.1,119.4L524.0,200.9M356.6,272.2L511.6,139.7M320.6,118.1L525.6,199.6M358.6,273.0L513.6,140.5M322.1,116.8L527.1,198.3M360.7,273.8L515.7,141.3M323.7,115.5L528.7,196.9M362.8,274.6L517.8,142.1M325.2,114.1L530.2,195.6M364.8,275.4L519.8,142.9M326.8,112.8L531.8,194.3M366.9,276.3L521.9,143.8M328.4,111.5L533.4,193.0M368.9,277.1L523.9,144.6M329.9,110.1L534.9,191.6M371.0,277.9L526.0,145.4M331.4,108.8L536.5,190.3M375.1,279.5L530.0,147.0M334.6,106.2L539.5,187.7M377.1,280.3L532.1,147.8M336.1,104.9L541.1,186.4M379.1,281.1L534.1,148.6M337.6,103.5L542.6,185.0M381.2,282.0L536.2,149.5M339.2,102.2L544.2,183.7M383.2,282.8L538.2,150.3M340.8,100.9L545.8,182.4M385.3,283.6L540.3,151.1M342.3,99.5L547.3,181.1M387.4,284.4L542.4,151.9M343.9,98.2L548.9,179.7M389.4,285.2L544.4,152.7M345.4,96.9L550.4,178.4M391.4,286.0L546.5,153.5M346.9,95.6L552.0,177.1M395.6,287.7L550.5,155.2M350.1,92.9L555.0,174.4M397.6,288.5L552.6,156.0M351.6,91.6L556.6,173.1M399.6,289.3L554.6,156.8M353.1,90.3L558.1,171.8M401.7,290.1L556.7,157.6M354.7,89.0L559.7,170.4M403.8,290.9L558.8,158.4M356.2,87.6L561.2,169.1M405.8,291.7L560.8,159.2M357.8,86.3L562.8,167.8M407.9,292.6L562.9,160.1M359.4,85.0L564.4,166.5M409.9,293.4L564.9,160.9M360.9,83.7L565.9,165.2M411.9,294.2L567.0,161.7M362.4,82.3L567.5,163.8" stroke="#23234a" stroke-width=".4" opacity=".24" fill="none"/>
<path d="M209.0,213.5L364.0,81.0M209.0,213.5L414.0,295.0M229.5,221.7L384.5,89.2M224.5,200.2L429.5,281.8M250.0,229.8L405.0,97.3M240.0,187.0L445.0,268.5M270.5,237.9L425.5,105.4M255.5,173.8L460.5,255.2M291.0,246.1L446.0,113.6M271.0,160.5L476.0,242.0M311.5,254.2L466.5,121.8M286.5,147.2L491.5,228.8M332.0,262.4L487.0,129.9M302.0,134.0L507.0,215.5M352.5,270.6L507.5,138.1M317.5,120.8L522.5,202.2M373.0,278.7L528.0,146.2M333.0,107.5L538.0,189.0M393.5,286.9L548.5,154.4M348.5,94.2L553.5,175.8M414.0,295.0L569.0,162.5M364.0,81.0L569.0,162.5" stroke="#26264c" stroke-width=".8" opacity=".48" fill="none"/>
<polygon points="388.0,183.0 512.0,231.0 512.3,236.3 388.3,188.3" fill="#a0a0a0" stroke="#1a1a1a" stroke-width="0.9" stroke-linejoin="round" />
<polygon points="512.0,231.0 603.0,153.5 603.3,158.8 512.3,236.3" fill="#a2a2a2" stroke="#1a1a1a" stroke-width="0.9" stroke-linejoin="round" />
<polygon points="388.0,183.0 512.0,231.0 603.0,153.5 479.0,105.5" fill="#888888" stroke="#1a1a1a" stroke-width="0.9" stroke-linejoin="round" />
<polygon points="463.0,95.0 484.0,103.2 485.5,126.5 464.5,118.3" fill="#a90c0c" stroke="#1a1a1a" stroke-width="0.9" stroke-linejoin="round" />
<polygon points="484.0,103.2 498.5,90.4 500.0,113.7 485.5,126.5" fill="#950909" stroke="#1a1a1a" stroke-width="0.9" stroke-linejoin="round" />
<polygon points="463.0,95.0 484.0,103.2 498.5,90.4 477.5,82.2" fill="#ab0d0d" stroke="#1a1a1a" stroke-width="0.9" stroke-linejoin="round" />
<polygon points="566.1,136.5 586.1,144.3 588.3,164.6 568.3,156.8" fill="#a90c0c" stroke="#1a1a1a" stroke-width="0.9" stroke-linejoin="round" />
<polygon points="586.1,144.3 600.9,132.5 603.1,152.8 588.3,164.6" fill="#950909" stroke="#1a1a1a" stroke-width="0.9" stroke-linejoin="round" />
<polygon points="566.1,136.5 586.1,144.3 600.9,132.5 580.9,124.7" fill="#ab0d0d" stroke="#1a1a1a" stroke-width="0.9" stroke-linejoin="round" />
<polygon points="386.0,161.5 447.5,185.3 449.5,206.8 388.0,183.0" fill="#0a0aa4" stroke="#1a1a1a" stroke-width="0.9" stroke-linejoin="round" />
<polygon points="447.5,185.3 493.0,146.6 495.0,168.1 449.5,206.8" fill="#07078a" stroke="#1a1a1a" stroke-width="0.9" stroke-linejoin="round" />
<polygon points="386.0,161.5 447.5,185.3 493.0,146.6 431.5,122.8" fill="#0909a0" stroke="#1a1a1a" stroke-width="0.9" stroke-linejoin="round" />
<path d="M445.6,117.8 L447,137.7 A26,15.6 0 0 0 499,137.7 L497.6,117.8 Z" fill="url(#cyl)" stroke="#1a1a1a" stroke-width=".9"/>
<ellipse cx="471.6" cy="117.8" rx="26" ry="15.6" fill="#7645aa" stroke="#1a1a1a" stroke-width=".9"/>
<path d="M493.3,128 L493.8,145" stroke="#2a1a40" stroke-width=".7"/>
<path d="M494,147 L497,345" stroke="#1a1a1a" stroke-width=".75"/>
<polygon points="489.5,203.0 510.5,211.2 512.0,231.0 491.0,222.8" fill="#a90c0c" stroke="#1a1a1a" stroke-width="0.9" stroke-linejoin="round" />
<polygon points="510.5,211.2 525.0,198.4 526.5,218.2 512.0,231.0" fill="#950909" stroke="#1a1a1a" stroke-width="0.9" stroke-linejoin="round" />
<polygon points="489.5,203.0 510.5,211.2 525.0,198.4 504.0,190.2" fill="#ab0d0d" stroke="#1a1a1a" stroke-width="0.9" stroke-linejoin="round" />
<path d="M494.9,213.5 L495.3,228" stroke="#1a1a1a" stroke-width=".75"/>
<polygon points="445.0,294.2 465.2,302.2 466.4,323.3 446.2,315.3" fill="#aea20a" stroke="#1a1a1a" stroke-width="0.9" stroke-linejoin="round" />
<polygon points="465.2,302.2 480.3,289.2 481.5,310.3 466.4,323.3" fill="#978b04" stroke="#1a1a1a" stroke-width="0.9" stroke-linejoin="round" />
<polygon points="445.0,294.2 465.2,302.2 480.3,289.2 460.1,281.2" fill="#b4a80a" stroke="#1a1a1a" stroke-width="0.9" stroke-linejoin="round" />
<ellipse cx="462.4" cy="292" rx="5" ry="3.6" fill="#a09404" stroke="#1a1a1a" stroke-width=".7"/><ellipse cx="462.8" cy="292.5" rx="3.8" ry="2.6" fill="#dcd40c"/>
<polygon points="507.4,281.5 520.8,292.0 514.0,299.7 509.4,302.0" fill="#0a640a" stroke="#1a1a1a" stroke-width="0.9" stroke-linejoin="round" />
<polygon points="539.3,279.6 540.6,290.5 532.0,289.8 528.5,288.5" fill="#0a640a" stroke="#1a1a1a" stroke-width="0.9" stroke-linejoin="round" />
<polygon points="514.0,299.7 529.8,303.7 530.0,325.0 515.4,320.1" fill="#0f8a0f" stroke="#1a1a1a" stroke-width="0.9" stroke-linejoin="round" />
<polygon points="529.8,303.7 531.8,292.8 533.5,314.7 530.0,325.0" fill="#075207" stroke="#1a1a1a" stroke-width="0.9" stroke-linejoin="round" />
<polygon points="531.8,292.8 543.3,290.1 545.5,310.7 533.5,314.7" fill="#0f8a0f" stroke="#1a1a1a" stroke-width="0.9" stroke-linejoin="round" />
<polygon points="507.4,281.5 523.5,285.7 539.3,279.6 528.5,288.5 543.3,290.1 531.8,292.8 529.8,303.7 514.0,299.7 520.8,292.0" fill="#0d7e0d" stroke="#1a1a1a" stroke-width="0.9" stroke-linejoin="round" />
<path d="M449.6,340.2 L451.3,360.6 A26,15.4 0 0 0 503.3,360.6 L501.6,340.2 Z" fill="url(#cyl)" stroke="#1a1a1a" stroke-width=".9"/>
<ellipse cx="475.6" cy="340.2" rx="26" ry="15.4" fill="#7645aa" stroke="#1a1a1a" stroke-width=".9"/>
<path d="M495.4,349.5 L497.6,368.8" stroke="#30d050" stroke-width="1.1"/>
<path d="M494.4,149.4 L495.8,167" stroke="#e8e030" stroke-width="1.2"/>
<circle cx="493.8" cy="146.2" r="3" fill="#fff"/>
<path d="M491,155.8h8.5M495.2,151.5v9" stroke="#333" stroke-width="2.2"/><path d="M491.5,155.8h7.5M495.2,152v8" stroke="#fff" stroke-width="1"/>
<path d="M502.5,162.5 L508,157.8" stroke="#16a07e" stroke-width="2" stroke-linecap="round"/><circle cx="502.2" cy="163" r="2" fill="#16a07e"/>
<path d="M761.5,399.5 L760.8,387.6" stroke="#2030b0" stroke-width="1.6"/><path d="M761.5,399.5 L768.4,394.2" stroke="#30a030" stroke-width="1.6"/><path d="M761.5,399.5 L773.6,404.6" stroke="#b02020" stroke-width="1.6"/>
<text x="762" y="389" font-family="Liberation Sans" font-size="6.5" fill="#222">Z</text><text x="769.5" y="395" font-family="Liberation Sans" font-size="6.5" fill="#222">Y</text><text x="774.5" y="406" font-family="Liberation Sans" font-size="6.5" fill="#222">X</text></svg>
<svg class="a" style="left:787px;top:51px" width="7" height="3" viewBox="0 0 7 3"><rect x="0" y="1" width="1" height="1" fill="#c0beba"/><rect x="2" y="1" width="1" height="1" fill="#c0beba"/><rect x="4" y="1" width="1" height="1" fill="#c0beba"/></svg>
<div class="a" style="left:782px;top:56.5px;width:15px;height:15px;border:1px solid #d6d3cf;border-radius:3px;background:linear-gradient(#fdfdfd,#f1f0ef)"></div>
<svg class="a" style="left:782px;top:57px" width="15" height="15" viewBox="0 0 14 14"><rect x="3.5" y="6" width="7" height="6" rx="1" fill="#1a8a6a"/><path d="M5 6V4.5a2 2 0 0 1 4 0V6" stroke="#1a8a6a" stroke-width="1.5" fill="none"/></svg>
<div class="a" style="left:782px;top:72.5px;width:15px;height:15px;border:1px solid #d6d3cf;border-radius:3px;background:linear-gradient(#fdfdfd,#f1f0ef)"></div>
<svg class="a" style="left:782px;top:73px" width="15" height="15" viewBox="0 0 14 14"><path d="M3 11 11 3" stroke="#1a8a6a" stroke-width="2"/><path d="M5 9 9 5" stroke="#1a8a6a" stroke-width="3.5"/></svg>
<div class="a" style="left:782px;top:88.5px;width:15px;height:15px;border:1px solid #d6d3cf;border-radius:3px;background:linear-gradient(#fdfdfd,#f1f0ef)"></div>
<svg class="a" style="left:782px;top:89px" width="15" height="15" viewBox="0 0 14 14"><path d="M7 3v8M3 11.5h8" stroke="#1a8a6a" stroke-width="2.2"/></svg>
<div class="a" style="left:782px;top:104.5px;width:15px;height:15px;border:1px solid #d6d3cf;border-radius:3px;background:linear-gradient(#fdfdfd,#f1f0ef)"></div>
<svg class="a" style="left:782px;top:105px" width="15" height="15" viewBox="0 0 14 14"><path d="M4.5 4.5h5v5h-5z" fill="none" stroke="#1a8a6a" stroke-width="1.8"/><circle cx="4" cy="4" r="1.6" fill="#1a8a6a"/><circle cx="10" cy="4" r="1.6" fill="#1a8a6a"/><circle cx="4" cy="10" r="1.6" fill="#1a8a6a"/><circle cx="10" cy="10" r="1.6" fill="#1a8a6a"/></svg>
<div class="a" style="left:782px;top:120.5px;width:15px;height:15px;border:1px solid #d6d3cf;border-radius:3px;background:linear-gradient(#fdfdfd,#f1f0ef)"></div>
<svg class="a" style="left:782px;top:121px" width="15" height="15" viewBox="0 0 14 14"><path d="M3.5 3.5 10.5 10.5M10.5 3.5 3.5 10.5" stroke="#1a8a6a" stroke-width="2.4"/></svg>
<div class="a" style="left:782px;top:136.5px;width:15px;height:15px;border:1px solid #d6d3cf;border-radius:3px;background:linear-gradient(#fdfdfd,#f1f0ef)"></div>
<svg class="a" style="left:782px;top:137px" width="15" height="15" viewBox="0 0 14 14"><path d="M3 7.5 10 3.5M4 10.5 11 6.5" stroke="#1a8a6a" stroke-width="2"/></svg>
<div class="a" style="left:782px;top:152.5px;width:15px;height:15px;border:1px solid #d6d3cf;border-radius:3px;background:linear-gradient(#fdfdfd,#f1f0ef)"></div>
<svg class="a" style="left:782px;top:153px" width="15" height="15" viewBox="0 0 14 14"><path d="M4 10 11 4" stroke="#1a8a6a" stroke-width="1.8"/><circle cx="4" cy="10" r="2" fill="#1a8a6a"/></svg>
<div class="a" style="left:782px;top:168.5px;width:15px;height:15px;border:1px solid #d6d3cf;border-radius:3px;background:linear-gradient(#fdfdfd,#f1f0ef)"></div>
<svg class="a" style="left:782px;top:169px" width="15" height="15" viewBox="0 0 14 14"><path d="M7 3 11 7 7 11 3 7z" fill="none" stroke="#1a8a6a" stroke-width="2"/><circle cx="7" cy="3" r="1.4" fill="#1a8a6a"/><circle cx="7" cy="11" r="1.4" fill="#1a8a6a"/><circle cx="3" cy="7" r="1.4" fill="#1a8a6a"/><circle cx="11" cy="7" r="1.4" fill="#1a8a6a"/></svg>
<div class="a" style="left:782px;top:184.5px;width:15px;height:15px;border:1px solid #d6d3cf;border-radius:3px;background:linear-gradient(#fdfdfd,#f1f0ef)"></div>
<svg class="a" style="left:782px;top:185px" width="15" height="15" viewBox="0 0 14 14"><circle cx="7" cy="7" r="4" fill="none" stroke="#1a8a6a" stroke-width="1.8"/><circle cx="7" cy="7" r="1.5" fill="#1a8a6a"/></svg>
<div class="a" style="left:782px;top:200.5px;width:15px;height:15px;border:1px solid #d6d3cf;border-radius:3px;background:linear-gradient(#fdfdfd,#f1f0ef)"></div>
<svg class="a" style="left:782px;top:201px" width="15" height="15" viewBox="0 0 14 14"><circle cx="3.5" cy="7" r="1.4" fill="#1a8a6a"/><circle cx="7" cy="7" r="1.4" fill="#1a8a6a"/><circle cx="10.5" cy="7" r="1.4" fill="#1a8a6a"/></svg>
<div class="a" style="left:782px;top:216.5px;width:15px;height:15px;border:1px solid #d6d3cf;border-radius:3px;background:linear-gradient(#fdfdfd,#f1f0ef)"></div>
<svg class="a" style="left:782px;top:217px" width="15" height="15" viewBox="0 0 14 14"><path d="M3 7 10 11" stroke="#1a8a6a" stroke-width="2"/><circle cx="9" cy="4.5" r="1.6" fill="#1a8a6a"/></svg>
<div class="a" style="left:782px;top:232.5px;width:15px;height:15px;border:1px solid #d6d3cf;border-radius:3px;background:linear-gradient(#fdfdfd,#f1f0ef)"></div>
<svg class="a" style="left:782px;top:233px" width="15" height="15" viewBox="0 0 14 14"><path d="M7 3.5v7M3.5 7h7" stroke="#1a8a6a" stroke-width="2.2"/></svg>
<div class="a" style="left:782px;top:248.5px;width:15px;height:15px;border:1px solid #d6d3cf;border-radius:3px;background:linear-gradient(#fdfdfd,#f1f0ef)"></div>
<svg class="a" style="left:782px;top:249px" width="15" height="15" viewBox="0 0 14 14"><path d="M3.5 11V8h3V5.5h3" stroke="#1a8a6a" stroke-width="1.6" fill="none"/><path d="M7 3.5h4v3.5" stroke="#1a8a6a" stroke-width="1.2" fill="none"/><rect x="2.5" y="10" width="3" height="2" fill="#1a8a6a"/></svg>
<div class="a" style="left:782px;top:264.5px;width:15px;height:15px;border:1px solid #d6d3cf;border-radius:3px;background:linear-gradient(#fdfdfd,#f1f0ef)"></div>
<svg class="a" style="left:782px;top:265px" width="15" height="15" viewBox="0 0 14 14"><rect x="3.3" y="2.6" width="8" height="8" rx=".8" fill="#1aa27c" stroke="#128a68" stroke-width=".6"/><circle cx="6.2" cy="6.8" r="1" fill="none" stroke="#0d6a50" stroke-width=".6"/></svg>
<div class="a" style="left:0px;top:438px;width:798px;height:1px;background:#dcdad6"></div>
<div class="a" style="left:188px;top:418px;width:121px;height:20px;background:linear-gradient(#fdfdfd,#f3f2f1);border:1px solid #d0cdc9;border-top:none;border-radius:0 0 3px 3px"></div>
<svg class="a" style="left:192px;top:423px" width="11" height="11" viewBox="0 0 11 11"><path d="M1 1h5v2.2H3.3V4.5H5v2H3.3V9H1z" fill="#e8401c"/><circle cx="7" cy="6.8" r="2.6" fill="none" stroke="#1d3fa8" stroke-width="1.6"/><path d="M7 3.2v1.2M7 9.2v1.2M3.4 6.8h1.2M9.4 6.8h1.2M4.5 4.3l.8.8M8.7 8.5l.8.8M4.5 9.3l.8-.8M8.7 5.1l.8-.8" stroke="#1d3fa8" stroke-width="1.2"/></svg>
<div class="a t" style="left:208px;top:425px;font-size:9.05px;color:#4a4a4a;font-weight:normal;">T10-ejemplo-ini : 1*</div>
<svg class="a" style="left:293px;top:424px" width="9" height="9" viewBox="0 0 9 9"><path d="M1.8 1.8 7.2 7.2M7.2 1.8 1.8 7.2" stroke="#5a5a5a" stroke-width="2.4" stroke-linecap="round"/></svg>
<div class="a t" style="left:717px;top:444px;font-size:9px;color:#4a4a4a;font-weight:normal;">230.21 x 143.52 mm</div>
</body></html>
